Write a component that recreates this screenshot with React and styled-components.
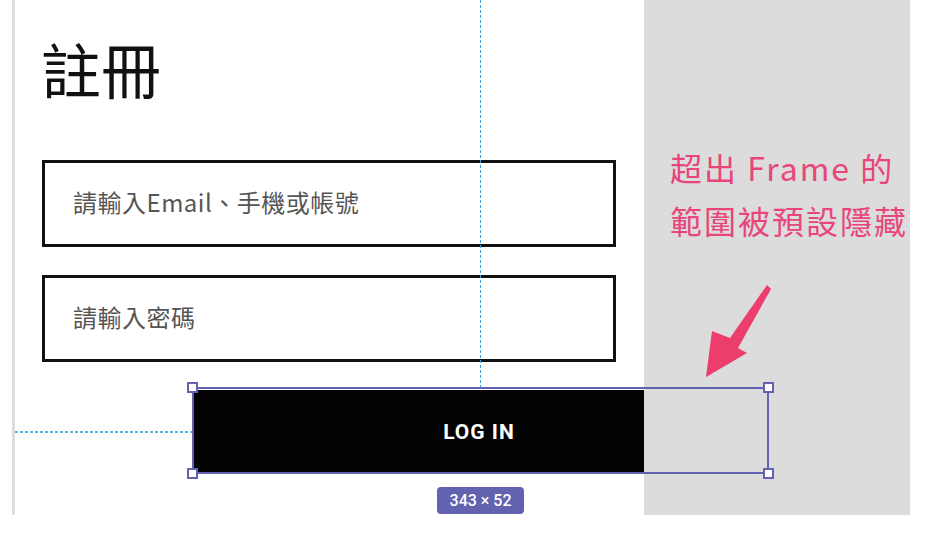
import React from "react";
import styled, { createGlobalStyle } from "styled-components";

const GlobalStyle = createGlobalStyle`
  body {
    margin: 0;
    background: #ffffff;
    font-family: "Noto Sans CJK TC", "Noto Sans", sans-serif;
  }
`;

const SELECT = "#6262b0";
const GUIDE = "#3ca3d9";
const PINK = "#e8457a";

export default function App() {
  return (
    <>
      <GlobalStyle />
      <Canvas>
        <Rule />
        <Frame>
          <Title>註冊</Title>
          <Field placeholder="請輸入Email、手機或帳號" />
          <Field placeholder="請輸入密碼" $gap={28} />
          <LoginButton>LOG IN</LoginButton>
        </Frame>
        <Outside>
          <Note>
            超出 Frame 的
            <br />
            範圍被預設隱藏
          </Note>
        </Outside>

        {/* editor overlays */}
        <VGuide />
        <HGuide />
        <Selection>
          <Handle $x="left" $y="top" />
          <Handle $x="left" $y="bottom" />
          <Handle $x="right" $y="top" />
          <Handle $x="right" $y="bottom" />
        </Selection>
        <SizeTag>343 × 52</SizeTag>
        <Arrow viewBox="0 0 76 100">
          <path
            d="M67 3 L71 7 L38 66 L47 71 L6 95 L12 49 L30 56 Z"
            fill="#ec3d6d"
          />
        </Arrow>
      </Canvas>
    </>
  );
}

const Canvas = styled.div`
  position: relative;
  display: flex;
  width: 910px;
  height: 515px;
`;

const Rule = styled.div`
  width: 3px;
  margin-left: 12px;
  background: #dddddd;
`;

const Frame = styled.div`
  box-sizing: border-box;
  width: 629px;
  padding: 32px 0 0 27px;
  background: #ffffff;
  overflow: hidden;
  display: flex;
  flex-direction: column;
  align-items: flex-start;
`;

const Title = styled.h1`
  margin: 0 0 0 -1px;
  font-size: 60px;
  line-height: 72px;
  font-weight: 400;
  color: #111111;
`;

const Field = styled.input`
  box-sizing: border-box;
  width: 574px;
  height: 87px;
  margin-top: ${({ $gap = 56 }) => $gap}px;
  padding: 0 0 5px 28px;
  border: 3px solid #111111;
  outline: none;
  background: #ffffff;
  font-family: "Noto Sans CJK TC", "Noto Sans", sans-serif;
  font-size: 24px;
  letter-spacing: 0.5px;
  &::placeholder {
    color: #555555;
    opacity: 1;
  }
`;

const LoginButton = styled.div`
  flex: none;
  box-sizing: border-box;
  width: 575px;
  height: 84px;
  margin: 28px 0 0 152px;
  padding-right: 5px;
  background: #030303;
  color: #ffffff;
  display: flex;
  align-items: center;
  justify-content: center;
  font-family: Roboto, "Liberation Sans", sans-serif;
  font-weight: 700;
  font-size: 21px;
  letter-spacing: 1px;
`;

const Outside = styled.div`
  flex: 1;
  background: #dcdcdc;
  padding: 141px 0 0 26px;
`;

const Note = styled.div`
  color: ${PINK};
  font-family: "Noto Sans CJK TC", "Liberation Sans", sans-serif;
  font-size: 32px;
  line-height: 53px;
  letter-spacing: 2px;
  white-space: nowrap;
`;

const VGuide = styled.div`
  position: absolute;
  left: 480px;
  top: 0;
  width: 1px;
  height: 387px;
  background: repeating-linear-gradient(
    to bottom,
    ${GUIDE} 0 3px,
    transparent 3px 5px
  );
`;

const HGuide = styled.div`
  position: absolute;
  left: 15px;
  top: 431px;
  width: 177px;
  height: 2px;
  background: repeating-linear-gradient(
    to right,
    #5ab4e2 0 3px,
    transparent 3px 5px
  );
`;

const Selection = styled.div`
  position: absolute;
  left: 192px;
  top: 387px;
  width: 577px;
  height: 87px;
  box-sizing: border-box;
  border: 2px solid ${SELECT};
`;

const Handle = styled.div`
  position: absolute;
  width: 11px;
  height: 11px;
  box-sizing: border-box;
  background: #ffffff;
  border: 2px solid ${SELECT};
  ${({ $x }) => $x}: -7px;
  ${({ $y }) => $y}: -7px;
`;

const SizeTag = styled.div`
  position: absolute;
  left: 437px;
  top: 487px;
  width: 87px;
  height: 27px;
  border-radius: 4px;
  background: ${SELECT};
  color: #ffffff;
  display: flex;
  align-items: center;
  justify-content: center;
  font-family: Roboto, "Liberation Sans", sans-serif;
  font-size: 16px;
  font-weight: 500;
`;

const Arrow = styled.svg`
  position: absolute;
  left: 700px;
  top: 282px;
  width: 76px;
  height: 100px;
`;
